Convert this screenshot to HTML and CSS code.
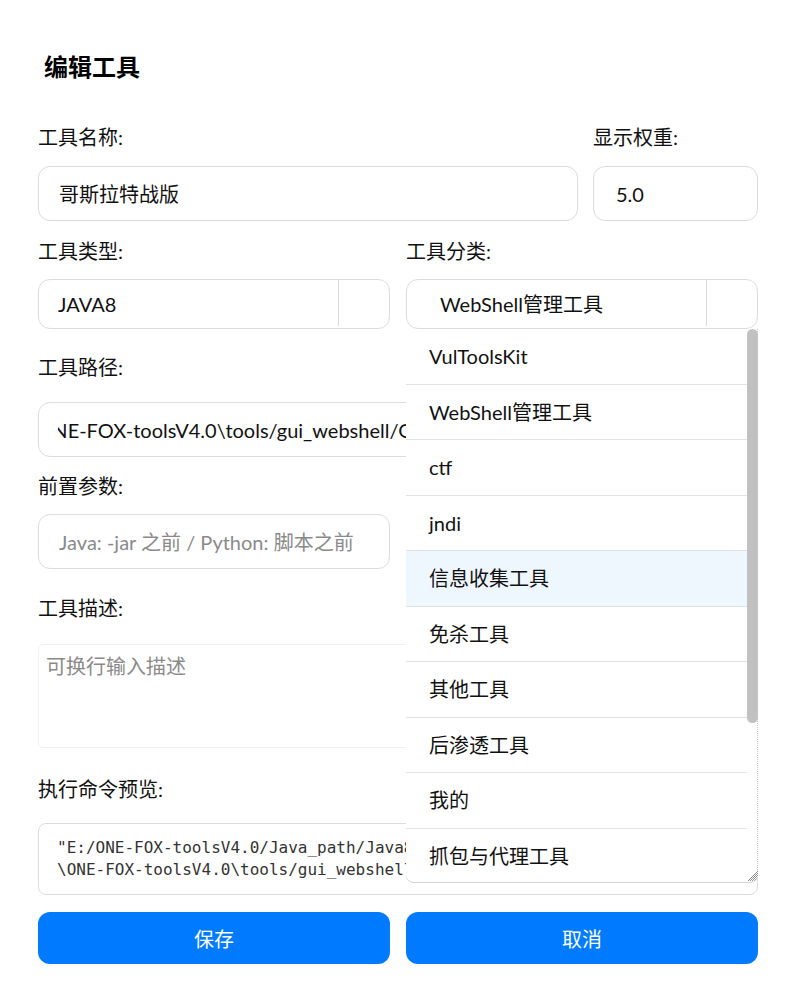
FILE: index.html
```html
<!DOCTYPE html>
<html lang="zh-CN">
<head>
    <meta charset="UTF-8">
    <meta name="viewport" content="width=device-width, initial-scale=1.0">
    <title>编辑工具</title>
    <link rel="stylesheet" href="styles.css">
</head>
<body>
    <div class="dialog">
        <h2 class="title">编辑工具</h2>

        <div class="row-name">
            <div class="field grow">
                <label for="toolName">工具名称:</label>
                <input type="text" id="toolName" class="text-input name-input" value="哥斯拉特战版">
            </div>
            <div class="field weight">
                <label for="toolWeight">显示权重:</label>
                <input type="text" id="toolWeight" class="text-input weight-input" value="5.0">
            </div>
        </div>

        <div class="row-half field-select">
            <div class="field">
                <label>工具类型:</label>
                <div class="select">
                    <span class="select-value">JAVA8</span>
                    <span class="select-arrow"></span>
                </div>
            </div>
            <div class="field">
                <label>工具分类:</label>
                <div class="select-wrap">
                    <div class="select">
                        <span class="select-value category-value">WebShell管理工具</span>
                        <span class="select-arrow"></span>
                    </div>
                    <!-- opened category list -->
                    <div class="dropdown">
                        <ul class="options">
                            <li>VulToolsKit</li>
                            <li>WebShell管理工具</li>
                            <li>ctf</li>
                            <li>jndi</li>
                            <li class="hover">信息收集工具</li>
                            <li>免杀工具</li>
                            <li>其他工具</li>
                            <li>后渗透工具</li>
                            <li>我的</li>
                            <li>抓包与代理工具</li>
                        </ul>
                        <div class="scrollbar">
                            <div class="thumb"></div>
                        </div>
                        <span class="grip"></span>
                    </div>
                </div>
            </div>
        </div>

        <div class="field field-path">
            <label for="toolPath">工具路径:</label>
            <input type="text" id="toolPath" class="text-input path-input" value="E:\ONE-FOX-toolsV4.0\tools/gui_webshell/Godzilla/godzilla.jar">
        </div>

        <div class="row-half field-args">
            <div class="field">
                <label for="preArgs">前置参数:</label>
                <input type="text" id="preArgs" class="text-input args-input" placeholder="Java: -jar 之前 / Python: 脚本之前">
            </div>
        </div>

        <div class="field field-desc">
            <label for="toolDesc">工具描述:</label>
            <textarea id="toolDesc" class="desc-input" placeholder="可换行输入描述"></textarea>
        </div>

        <div class="field field-preview">
            <label>执行命令预览:</label>
            <div class="preview">"E:/ONE-FOX-toolsV4.0/Java_path/Java8/bin/java.exe" -jar "E:
\ONE-FOX-toolsV4.0\tools/gui_webshell/Godzilla/godzilla.jar"</div>
        </div>

        <div class="actions">
            <button class="btn">保存</button>
            <button class="btn">取消</button>
        </div>
    </div>
</body>
</html>
```

FILE: styles.css
```css
body {
    background-color: #FFFFFF;
    color: #111111;
    font-family: "Microsoft YaHei", "Segoe UI", Lato, "Noto Sans CJK SC", sans-serif;
    margin: 0;
    padding: 0;
}
.dialog {
    padding: 50px 38px 0;
    width: 720px;
}
.title {
    font-family: "Noto Sans CJK SC", sans-serif;
    font-size: 24px;
    font-weight: 700;
    line-height: 32px;
    margin: 0 0 41px;
    padding-left: 6px;
    color: #000000;
}
label {
    display: block;
    font-size: 20px;
    line-height: 28px;
    margin-bottom: 14px;
}
.text-input {
    background-color: #FFFFFF;
    border: 1px solid #DCDCDC;
    border-radius: 12px;
    box-sizing: border-box;
    color: #111111;
    font-family: inherit;
    font-size: 20px;
    height: 55px;
    outline: none;
    padding: 0 20px;
    width: 100%;
}
.text-input::placeholder {
    color: #8A8A8A;
}

/* row 1: name + weight */
.row-name {
    display: flex;
    gap: 15px;
    margin-bottom: 16px;
}
.row-name label {
    margin-bottom: 15px;
}
.grow {
    flex: 1;
}
.weight {
    width: 165px;
}
.weight-input {
    padding-left: 22px;
}

/* half width rows */
.row-half {
    display: grid;
    grid-template-columns: 1fr 1fr;
    gap: 16px;
}
.field-select {
    margin-bottom: 24px;
}
.select-wrap {
    position: relative;
}
.select {
    border: 1px solid #DCDCDC;
    border-radius: 12px;
    box-sizing: border-box;
    display: flex;
    height: 50px;
    font-size: 20px;
}
.select-value {
    flex: 1;
    line-height: 48px;
    padding-left: 19px;
}
.category-value {
    padding-left: 33px;
}
.select-arrow {
    border-left: 1px solid #DCDCDC;
    margin-bottom: 2px;
    width: 50px;
}

.dropdown {
    background-color: #FFFFFF;
    border-radius: 0 0 8px 8px;
    box-shadow: 0 1px 0 #D4D4D4;
    display: flex;
    height: 553px;
    left: 0;
    overflow: hidden;
    position: absolute;
    top: 100%;
    width: 100%;
    z-index: 10;
}
.options {
    flex: 1;
    list-style: none;
    margin: 0;
    padding: 0;
}
.options li {
    border-bottom: 1px solid #E2E2E2;
    box-sizing: border-box;
    font-size: 20px;
    height: 55.5px;
    line-height: 54px;
    padding-left: 23px;
}
.options li.hover {
    background-color: #EEF6FE;
}
.scrollbar {
    border-right: 1px dotted #C8C8C8;
    box-sizing: border-box;
    width: 11px;
}
.thumb {
    background-color: #C1C1C1;
    border-radius: 6px;
    height: 394px;
    margin-right: -1px;
}
.grip {
    background-image:
        linear-gradient(to bottom right, #FFFFFF 50%, transparent 50%),
        repeating-conic-gradient(#8C8C8C 0 25%, #FFFFFF 0 50%);
    background-size: 100% 100%, 2px 2px;
    bottom: 1px;
    height: 10px;
    position: absolute;
    right: 0;
    width: 10px;
}

.field-path {
    margin-bottom: 15px;
}
.field-path label {
    margin-bottom: 21px;
}
.path-input {
    padding-left: 19px;
    text-indent: -47px;
}

.field-args {
    margin-bottom: 25px;
}

.field-desc {
    margin-bottom: 27px;
}
.field-desc label {
    margin-bottom: 22px;
}
.desc-input {
    border: 1px solid #F0F0F0;
    border-radius: 5px;
    box-sizing: border-box;
    display: block;
    font-family: inherit;
    font-size: 20px;
    height: 104px;
    outline: none;
    padding: 6px 7px;
    resize: none;
    width: 100%;
}
.desc-input::placeholder {
    color: #8A8A8A;
}

.field-preview {
    margin-bottom: 17px;
}
.field-preview label {
    margin-bottom: 20px;
}
.preview {
    border: 1px solid #DCDCDC;
    border-radius: 8px;
    color: #333333;
    font-family: "DejaVu Sans Mono", monospace;
    font-size: 16px;
    line-height: 22px;
    overflow: hidden;
    padding: 13px 18px;
    white-space: pre;
}

.actions {
    display: grid;
    grid-template-columns: 1fr 1fr;
    gap: 16px;
}
.btn {
    background-color: #007BFF;
    border: none;
    border-radius: 12px;
    color: #FFFFFF;
    cursor: pointer;
    font-family: inherit;
    font-size: 20px;
    height: 52px;
}
```
